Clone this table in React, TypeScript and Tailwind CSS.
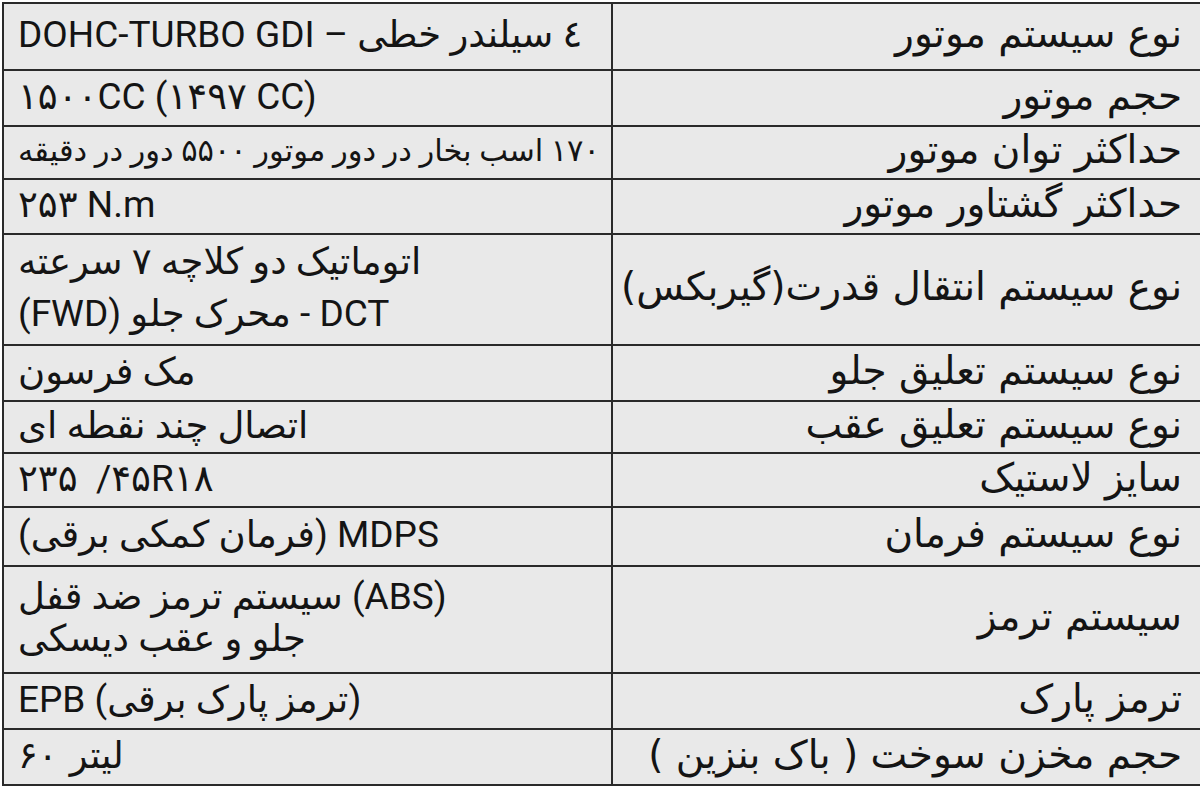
import React from "react";

type Row = { h: string; label: string; value: React.ReactNode };

const rows: Row[] = [
  { h: "h-[67px]", label: "نوع سیستم موتور", value: <span>٤ سیلندر خطی – DOHC-TURBO GDI</span> },
  { h: "h-[56px]", label: "حجم موتور", value: <span dir="ltr">۱۵۰۰CC (۱۴۹۷ CC)</span> },
  {
    h: "h-[53px]",
    label: "حداکثر توان موتور",
    value: <span className="text-[30.5px] whitespace-nowrap">۱۷۰ اسب بخار در دور موتور ۵۵۰۰ دور در دقیقه</span>,
  },
  { h: "h-[55px]", label: "حداکثر گشتاور موتور", value: <span dir="ltr">۲۵۳ N.m</span> },
  {
    h: "h-[111px]",
    label: "نوع سیستم انتقال قدرت(گیربکس)",
    value: (
      <div className="flex flex-col items-end leading-[52px]">
        <span>اتوماتیک دو کلاچه ۷ سرعته</span>
        <span>DCT - محرک جلو (FWD)</span>
      </div>
    ),
  },
  { h: "h-[56px]", label: "نوع سیستم تعلیق جلو", value: <span>مک فرسون</span> },
  { h: "h-[52px]", label: "نوع سیستم تعلیق عقب", value: <span>اتصال چند نقطه ای</span> },
  { h: "h-[54px]", label: "سایز لاستیک", value: <span dir="ltr">{"۲۳۵\u00a0\u00a0/۴۵R۱۸"}</span> },
  { h: "h-[59px]", label: "نوع سیستم فرمان", value: <span>MDPS (فرمان کمکی برقی)</span> },
  {
    h: "h-[107px]",
    label: "سیستم ترمز",
    value: (
      <div className="flex flex-col items-end leading-[42px]">
        <span>(ABS) سیستم ترمز ضد قفل</span>
        <span>جلو و عقب دیسکی</span>
      </div>
    ),
  },
  { h: "h-[56px]", label: "ترمز پارک", value: <span>(ترمز پارک برقی) EPB</span> },
  {
    h: "h-[56px]",
    label: "حجم مخزن سوخت ( باک بنزین )",
    value: (
      <span dir="ltr" className="flex gap-[12px]">
        <span>۶۰</span>
        <span>لیتر</span>
      </span>
    ),
  },
];

export default function App() {
  return (
    <div className="w-[1200px] h-[787px] overflow-hidden bg-white pt-[2px] pl-[2px]">
      <div
        dir="rtl"
        className="w-[1210px] border-t-2 border-r-2 border-[#2a2a2a] bg-[#e9e9e9] text-[#141414]"
      >
        {rows.map((r, i) => (
          <div key={i} className={`flex ${r.h}`}>
            <div
              className="w-[599px] shrink-0 border-b-2 border-l-2 border-[#2a2a2a] flex items-center justify-start pr-[28px] pb-[4px] text-[39px] whitespace-nowrap"
              style={{ fontFamily: '"DejaVu Sans", sans-serif' }}
            >
              {r.label}
            </div>
            <div
              className="flex-1 border-b-2 border-l-2 border-[#2a2a2a] flex items-center justify-end pl-[14px] pb-[3px] text-[37px]"
              style={{ fontFamily: '"Roboto", "DejaVu Sans", sans-serif' }}
            >
              {r.value}
            </div>
          </div>
        ))}
      </div>
    </div>
  );
}
